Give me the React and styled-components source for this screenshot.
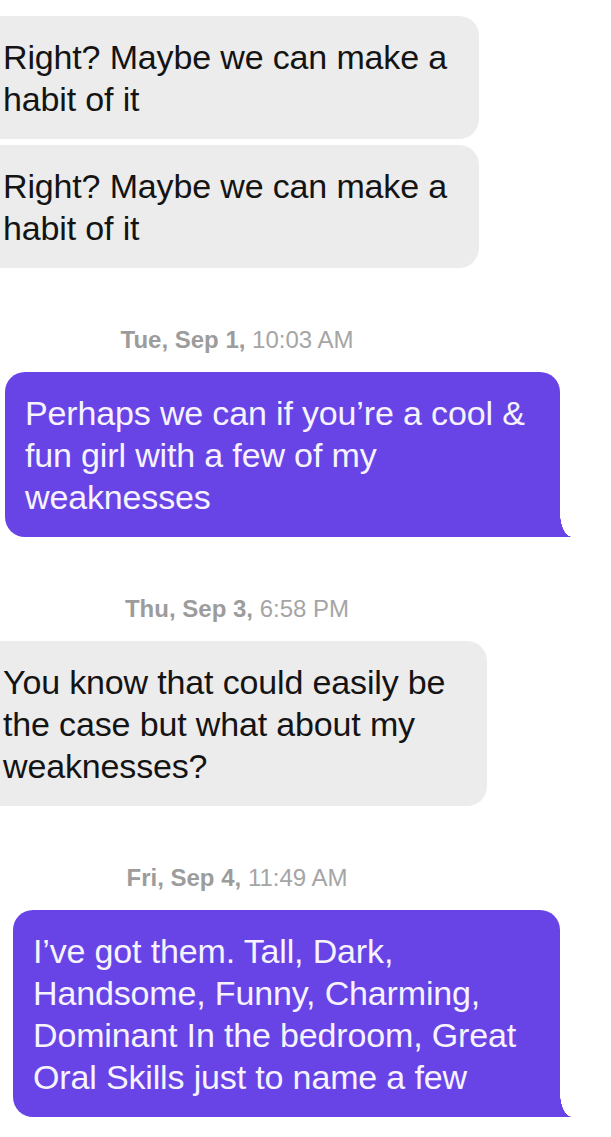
import React from "react";
import styled, { createGlobalStyle } from "styled-components";

const GlobalStyle = createGlobalStyle`
  html, body {
    margin: 0;
    padding: 0;
    background: #ffffff;
  }
  body {
    font-family: "Liberation Sans", Arial, sans-serif;
    overflow-x: hidden;
  }
`;

const Thread = styled.div`
  width: 611px;
  min-height: 1137px;
  display: flex;
  flex-direction: column;
  align-items: flex-start;
  padding-top: 16px;
  box-sizing: border-box;
  overflow: hidden;
  background: #ffffff;
`;

const Bubble = styled.div`
  position: relative;
  box-sizing: border-box;
  width: ${(p) => p.$width}px;
  margin-left: ${(p) => p.$left}px;
  margin-top: ${(p) => p.$gap || 0}px;
  padding: 20px 0 19px ${(p) => p.$pad}px;
  border-radius: 20px;
  font-size: 34px;
  line-height: 42px;
  white-space: pre;
  letter-spacing: -0.15px;
`;

const Incoming = styled(Bubble)`
  background: #ececec;
  color: #141414;
`;

const Outgoing = styled(Bubble)`
  background: #6844e7;
  color: #f6f3ff;
  border-bottom-right-radius: 0;

  &::after {
    content: "";
    position: absolute;
    right: -12px;
    bottom: 0;
    width: 12px;
    height: 24px;
    background: radial-gradient(
      ellipse 12px 24px at 100% 0,
      transparent 98%,
      #6844e7 100%
    );
  }
`;

const Stamp = styled.div`
  width: 474px;
  margin: 58px 0 18px;
  height: 28px;
  line-height: 28px;
  text-align: center;
  font-size: 24px;
  color: #a5a5a5;

  b {
    font-weight: 700;
    color: #9c9c9c;
  }
`;

const messages = [
  { type: "in", width: 499, left: -20, pad: 23, text: "Right? Maybe we can make a\nhabit of it" },
  { type: "in", width: 499, left: -20, pad: 23, gap: 6, text: "Right? Maybe we can make a\nhabit of it" },
  { type: "stamp", day: "Tue, Sep 1,", time: "10:03 AM" },
  { type: "out", width: 555, left: 5, pad: 20, text: "Perhaps we can if you’re a cool &\nfun girl with a few of my\nweaknesses" },
  { type: "stamp", day: "Thu, Sep 3,", time: "6:58 PM" },
  { type: "in", width: 507, left: -20, pad: 23, text: "You know that could easily be\nthe case but what about my\nweaknesses?" },
  { type: "stamp", day: "Fri, Sep 4,", time: "11:49 AM" },
  { type: "out", width: 547, left: 13, pad: 20, text: "I’ve got them. Tall, Dark,\nHandsome, Funny, Charming,\nDominant In the bedroom, Great\nOral Skills just to name a few" },
];

export default function App() {
  return (
    <>
      <GlobalStyle />
      <Thread>
        {messages.map((m, i) => {
          if (m.type === "stamp") {
            return (
              <Stamp key={i}>
                <b>{m.day}</b> {m.time}
              </Stamp>
            );
          }
          const Comp = m.type === "in" ? Incoming : Outgoing;
          return (
            <Comp key={i} $width={m.width} $left={m.left} $pad={m.pad} $gap={m.gap}>
              {m.text}
            </Comp>
          );
        })}
      </Thread>
    </>
  );
}
